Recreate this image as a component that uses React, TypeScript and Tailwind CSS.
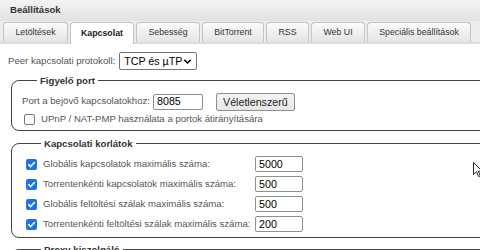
import React from "react";

const tabs = [
  { label: "Letöltések", w: "w-[65px]" },
  { label: "Kapcsolat", w: "w-[64px]", active: true },
  { label: "Sebesség", w: "w-[64px]" },
  { label: "BitTorrent", w: "w-[62px]" },
  { label: "RSS", w: "w-[43px]" },
  { label: "Web UI", w: "w-[54px]" },
  { label: "Speciális beállítások", w: "w-[104px]" },
];

const limits = [
  { label: "Globális kapcsolatok maximális száma:", value: "5000" },
  { label: "Torrentenkénti kapcsolatok maximális száma:", value: "500" },
  { label: "Globális feltöltési szálak maximális száma:", value: "500" },
  { label: "Torrentenkénti feltöltési szálak maximális száma:", value: "200" },
];

function Check({ checked }: { checked: boolean }) {
  return checked ? (
    <span className="flex h-[11px] w-[11px] items-center justify-center rounded-[2px] bg-[#1a73e8]">
      <svg width="9" height="9" viewBox="0 0 10 10">
        <path d="M2 5.2 L4.1 7.3 L8.2 2.8" fill="none" stroke="white" strokeWidth="1.8" strokeLinecap="round" strokeLinejoin="round" />
      </svg>
    </span>
  ) : (
    <span className="block h-[11px] w-[11px] rounded-[2px] border border-[#767676] bg-white" />
  );
}

function TextBox({ value, w }: { value: string; w: string }) {
  return (
    <div className={`flex h-[16px] ${w} items-center rounded-[2px] border border-[#8f8f8f] bg-white pl-[3px] text-[10.7px] text-black`}>
      {value}
    </div>
  );
}

export default function App() {
  return (
    <div className="relative h-[250px] w-[480px] overflow-hidden bg-white font-['Liberation_Sans',Arial,sans-serif]">
      {/* title bar */}
      <div className="flex h-[21px] items-center bg-gradient-to-b from-[#f4f4f4] to-[#e2e2e2] pl-[10px] text-[9.6px] font-bold text-[#333]">
        Beállítások
      </div>
      {/* tabs */}
      <div className="flex h-[23px] items-end gap-[2px] border-b-[2px] border-[#dcdcdc] bg-[#ececec] pl-[3px]">
        {tabs.map((t) => (
          <div
            key={t.label}
            className={`${t.w} flex items-center justify-center rounded-t-[4px] border border-b-0 border-[#c4c4c4] text-[8.8px] ${
              t.active
                ? "-mb-[2px] h-[22px] bg-white font-bold text-[#222]"
                : "h-[20px] bg-gradient-to-b from-[#fbfbfb] to-[#e4e4e4] text-[#333]"
            }`}
          >
            {t.label}
          </div>
        ))}
      </div>
      {/* content */}
      <div className="w-[540px] pt-[8px] text-[9.6px] text-[#555]">
        <div className="flex h-[18px] items-center pl-[8px]">
          <span>Peer kapcsolati protokoll:</span>
          <div className="ml-[4px] flex h-[18px] w-[78px] items-center justify-between rounded-[2px] border border-[#767676] bg-white pl-[4px] pr-[4px] text-[10.7px] text-black">
            <span>TCP és µTP</span>
            <svg width="9" height="9" viewBox="0 0 10 10">
              <path d="M1.5 3.2 L5 6.7 L8.5 3.2" fill="none" stroke="black" strokeWidth="1.7" />
            </svg>
          </div>
        </div>

        <fieldset className="ml-[11px] mt-[5px] rounded-[8px] border border-[#444] pb-[3px] pl-[10px] pt-[6px]">
          <legend className="ml-[15px] px-[3px] text-[9.6px] font-bold leading-[11px] text-[#333]">Figyelő port</legend>
          <div className="flex h-[19px] items-center">
            <span>Port a bejövő kapcsolatokhoz:</span>
            <div className="ml-[3px]">
              <TextBox value="8085" w="w-[50px]" />
            </div>
            <button className="ml-[13px] h-[18px] rounded-[2px] border border-[#8f8f8f] bg-gradient-to-b from-[#f4f4f4] to-[#e6e6e6] px-[6px] text-[10.7px] text-[#222]">
              Véletlenszerű
            </button>
          </div>
          <div className="mt-[1px] flex h-[15px] items-center pl-[2px]">
            <Check checked={false} />
            <span className="ml-[6px]">UPnP / NAT-PMP használata a portok átirányítására</span>
          </div>
        </fieldset>

        <fieldset className="ml-[11px] mt-[7px] rounded-[8px] border border-[#444] pb-[3px] pl-[14px] pt-[5px]">
          <legend className="ml-[15px] px-[3px] text-[9.6px] font-bold leading-[11px] text-[#333]">Kapcsolati korlátok</legend>
          {limits.map((l) => (
            <div key={l.label} className="flex h-[20px] items-center">
              <Check checked={true} />
              <span className="ml-[6px] w-[212px]">{l.label}</span>
              <TextBox value={l.value} w="w-[48px]" />
            </div>
          ))}
        </fieldset>

        <fieldset className="ml-[11px] mt-[6px] rounded-[8px] border border-[#444] pl-[14px] pt-[8px]">
          <legend className="ml-[15px] px-[3px] text-[9.6px] font-bold leading-[11px] text-[#333]">Proxy kiszolgáló</legend>
          <div className="h-[20px]" />
        </fieldset>
      </div>

      {/* mouse cursor */}
      <svg className="absolute left-[473px] top-[162px]" width="10" height="16" viewBox="0 0 10 16">
        <path d="M0.5 0.5 L0.5 12.5 L3.5 9.8 L5.6 14.6 L7.4 13.8 L5.4 9.2 L9.2 9.2 Z" fill="white" stroke="#222" strokeWidth="1" strokeLinejoin="round" />
      </svg>
    </div>
  );
}
